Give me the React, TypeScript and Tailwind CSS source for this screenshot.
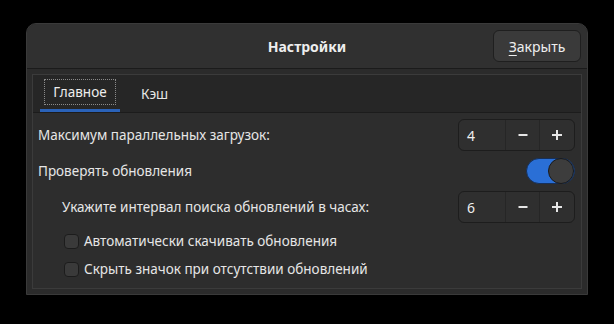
import React from "react";

const font = { fontFamily: '"Noto Sans", "Open Sans", sans-serif' };

function SpinBox({ value }: { value: number }) {
  return (
    <div className="flex h-[32px] w-[117px] rounded-[6px] border border-[#1d1d1d] bg-[#2f2f2f] text-[14px] text-[#eeeeee]">
      <div className="flex w-[46px] items-center pl-[8px]">{value}</div>
      <div className="flex w-[34px] items-center justify-center border-l border-[#262626]">
        <svg width="12" height="12" viewBox="0 0 12 12">
          <path d="M1.5 6h9" stroke="#e6e6e6" strokeWidth="2" />
        </svg>
      </div>
      <div className="flex flex-1 items-center justify-center border-l border-[#262626]">
        <svg width="12" height="12" viewBox="0 0 12 12">
          <path d="M1 6h10M6 1v10" stroke="#e6e6e6" strokeWidth="2" />
        </svg>
      </div>
    </div>
  );
}

function Toggle() {
  return (
    <div className="flex h-[26px] w-[49px] items-center justify-end rounded-full border border-[#16305a] bg-[#2a6fd6]">
      <div className="h-[26px] w-[26px] rounded-full border border-[#1a1a1a] bg-[#3d3d3d]" />
    </div>
  );
}

function CheckRow({ label }: { label: string }) {
  return (
    <div className="flex h-[15px] items-center gap-[5px] pl-[26px]">
      <div className="h-[15px] w-[15px] rounded-[4px] border border-[#1c1c1c] bg-[#3a3a3a]" />
      <span className="text-[13.5px] text-[#e6e6e6]">{label}</span>
    </div>
  );
}

export default function App() {
  return (
    <div className="h-[324px] w-[614px] bg-black pl-[26px] pt-[23px]" style={font}>
      <div className="flex h-[272px] w-[562px] flex-col overflow-hidden rounded-t-[10px] border border-[#3a3a3a] bg-[#2b2b2b]">
        <div className="relative flex h-[45px] shrink-0 items-center justify-center border-b border-[#1b1b1b] bg-[#303030]">
          <span className="text-[14px] font-bold text-[#eeeeee]">Настройки</span>
          <button className="absolute right-[6px] top-[6px] flex h-[32px] w-[88px] items-center justify-center rounded-[6px] border border-[#1f1f1f] bg-[#3a3a3a] text-[14px] text-[#eeeeee]">
            <span className="underline underline-offset-[3px] decoration-1">З</span>акрыть
          </button>
        </div>
        <div className="flex flex-1 flex-col px-[5px] pb-[5px] pt-[5px]">
          <div className="flex flex-1 flex-col border border-[#3b3b3b]">
            <div className="flex h-[38px] shrink-0 items-end border-b border-[#1c1c1c] bg-[#262626] pl-[7px]">
              <div className="flex h-[37px] w-[80px] flex-col items-center border-b-[3px] border-[#2a62b8] pt-[4px]">
                <div className="flex h-[26px] w-[72px] items-center justify-center border border-dotted border-[#8a8a8a] text-[13.5px] text-[#eeeeee]">
                  Главное
                </div>
              </div>
              <div className="flex h-[37px] items-start pl-[21px] pt-[9px] text-[13.5px] text-[#e6e6e6]">Кэш</div>
            </div>
            <div className="flex flex-1 flex-col bg-[#2d2d2d] pl-[5px] pr-[6px] pt-[6px] text-[13.5px] text-[#e6e6e6]">
              <div className="flex h-[32px] items-center justify-between">
                <span>Максимум параллельных загрузок:</span>
                <SpinBox value={4} />
              </div>
              <div className="mt-[7px] flex h-[26px] items-center justify-between">
                <span>Проверять обновления</span>
                <Toggle />
              </div>
              <div className="mt-[7px] flex h-[32px] items-center justify-between">
                <span className="pl-[24px]">Укажите интервал поиска обновлений в часах:</span>
                <SpinBox value={6} />
              </div>
              <div className="mt-[11px] flex flex-col gap-[13px]">
                <CheckRow label="Автоматически скачивать обновления" />
                <CheckRow label="Скрыть значок при отсутствии обновлений" />
              </div>
            </div>
          </div>
        </div>
      </div>
    </div>
  );
}
